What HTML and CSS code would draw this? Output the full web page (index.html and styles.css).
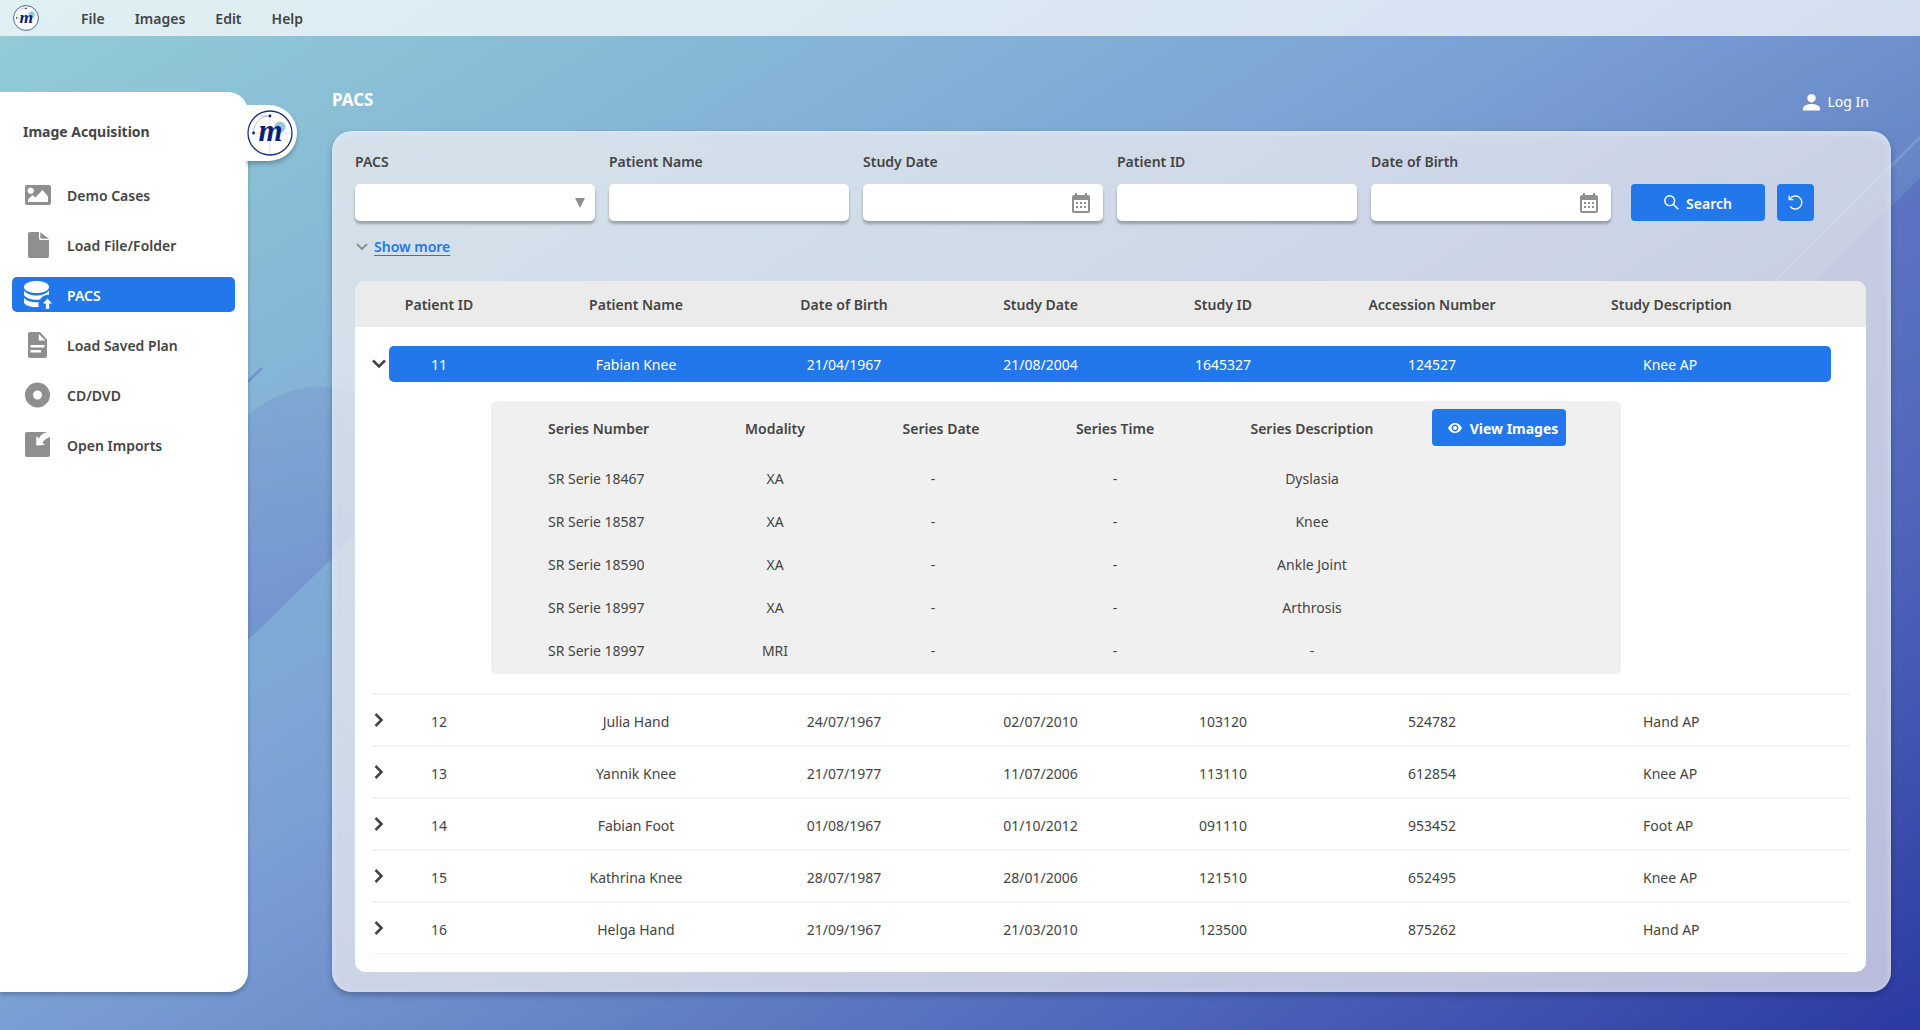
FILE: index.html
```html
<!DOCTYPE html>
<html lang="en">
<head>
<meta charset="utf-8">
<meta name="viewport" content="width=device-width, initial-scale=1.0">
  <title>PACS - Image Acquisition</title>
<link rel="stylesheet" href="styles.css">
</head>
<body>

<!-- shared symbols -->
<svg class="symbols" aria-hidden="true">
  <symbol id="logo" viewBox="0 0 46 46" overflow="visible">
    <circle cx="23" cy="23" r="22" fill="#fff" stroke="#1b2f7c" stroke-width="1.3"/>
    <circle cx="33" cy="17" r="5.6" fill="#93cbdc"/>
    <path d="M23 6v38M5 23h39" stroke="#a9b4d3" stroke-width=".5"/>
    <path d="M6.5 22C7 13 14 6.500 22 6M13 6h10" fill="none" stroke="#8d9bc4" stroke-width=".6"/>
    <circle cx="23" cy="6" r="1.4" fill="#0c1f70"/>
    <circle cx="6.500" cy="23" r="1.4" fill="#0c1f70"/>
    <text x="23.500" y="31" text-anchor="middle" class="logo-letter">m</text>
  </symbol>
  <symbol id="calendar" viewBox="0 0 18 20">
    <path fill="#8f8f8f" fill-rule="evenodd" d="M3 0h2v2h8V0h2v2h1a2 2 0 0 1 2 2v14a2 2 0 0 1-2 2H2a2 2 0 0 1-2-2V4a2 2 0 0 1 2-2h1zM2 7v11h14V7zM4 9h2v2H4zM8 9h2v2H8zM12 9h2v2h-2zM4 13h2v2H4zM8 13h2v2H8zM12 13h2v2h-2z"/>
  </symbol>
  <symbol id="chevron" viewBox="0 0 10 14">
    <path d="M1.500 1L7.500 7L1.500 13" fill="none" stroke="#444" stroke-width="2.600"/>
  </symbol>
</svg>

<!-- page backdrop -->
<svg class="backdrop" viewBox="0 0 1920 1030" preserveAspectRatio="none" aria-hidden="true">
  <defs>
    <linearGradient id="drop" x1="0" y1="0" x2="0" y2="1">
      <stop offset="0" stop-color="#6a82c8" stop-opacity=".25"/>
      <stop offset="1" stop-color="#5a74c4" stop-opacity=".5"/>
    </linearGradient>
    <linearGradient id="wedge" x1="0" y1="0" x2="0" y2="1">
      <stop offset="0" stop-color="#4a55b8" stop-opacity=".35"/>
      <stop offset="1" stop-color="#4a55b8" stop-opacity="0"/>
    </linearGradient>
  </defs>
  <path fill="url(#drop)" d="M150 735V510C190 460 220 435 248 415C290 380 335 380 365 400C410 430 410 480 382 510L248 640Z"/>
  <path d="M230 398L261 369" stroke="#6f94cf" stroke-width="3" stroke-linecap="round"/>
  <path d="M1720 336L1920 137" stroke="#7fb0d8" stroke-opacity=".5" stroke-width="3"/>
  <path fill="url(#wedge)" d="M1920 178L1720 378V800H1920Z"/>
</svg>

<header class="menubar">
  <svg class="menubar-logo" role="img" aria-label="Home"><use href="#logo"/></svg>
  <nav class="menu">
    <a href="#">File</a>
    <a href="#">Images</a>
    <a href="#">Edit</a>
    <a href="#">Help</a>
  </nav>
</header>

<div class="app">

  <aside class="sidebar">
    <button class="sidebar-tab" type="button" aria-label="Toggle sidebar"><svg><use href="#logo"/></svg></button>
    <div class="sidebar-body">
      <h2 class="sidebar-title">Image Acquisition</h2>
      <nav class="sources">
        <a class="source" href="#">
          <svg viewBox="0 0 28 30"><path fill="#8f8f8f" fill-rule="evenodd" d="M3 5h22a2 2 0 0 1 2 2v16a2 2 0 0 1-2 2H3a2 2 0 0 1-2-2V7a2 2 0 0 1 2-2zM6.700 7.500a3.200 3.200 0 1 0 .01 0zM4 22h20v-5.500L18.500 10L11.500 17.500L8.500 15L4 19.500z"/></svg>
          <span>Demo Cases</span>
        </a>
        <a class="source" href="#">
          <svg viewBox="0 0 28 30"><path fill="#8f8f8f" d="M6 2h9v6.500a1.500 1.500 0 0 0 1.500 1.500H25v16a2 2 0 0 1-2 2H6a2 2 0 0 1-2-2V4a2 2 0 0 1 2-2zM16.300 2.200L25 8.700H17.500a1.200 1.200 0 0 1-1.200-1.200z"/></svg>
          <span>Load File/Folder</span>
        </a>
        <a class="source active" href="#">
          <svg viewBox="0 0 28 30"><path fill="#fff" d="M12.500 1C19.500 1 25 3.500 25 7S19.500 13 12.500 13S0 10.500 0 7S5.500 1 12.500 1zM0 10.500C2.500 14 7 15.500 12.500 15.500S22.500 14 25 10.500V14.800C21 14.800 17.500 16.500 16 19.600C9 20.500 2 18.500 0 15zM0 18C3 21.500 9 22.800 14.800 22.200C14.300 24 14.300 25.500 14.800 27C7 27.800 1 25.500 0 22.500zM23.500 18.500L28 23.500H25.200V29H21.800V23.500H19z"/></svg>
          <span>PACS</span>
        </a>
        <a class="source" href="#">
          <svg viewBox="0 0 28 30"><path fill="#8f8f8f" fill-rule="evenodd" d="M6 2h10l7 7.500V26a2 2 0 0 1-2 2H6a2 2 0 0 1-2-2V4a2 2 0 0 1 2-2zM14.800 4v6.500H21.500zM6.500 15v2.400h14V15zM6.500 20v2.400h10.500V20z"/></svg>
          <span>Load Saved Plan</span>
        </a>
        <a class="source" href="#">
          <svg viewBox="0 0 28 30"><circle cx="13.500" cy="15" r="8.500" fill="none" stroke="#8f8f8f" stroke-width="8"/></svg>
          <span>CD/DVD</span>
        </a>
        <a class="source" href="#">
          <svg viewBox="0 0 28 30"><path fill="#8f8f8f" d="M3 2H25A12 12 0 0 0 14.800 8.500L12.300 6V15.500L21 15L18.500 12.500Q21 8.500 26 7V25a2 2 0 0 1-2 2H3a2 2 0 0 1-2-2V4a2 2 0 0 1 2-2z"/></svg>
          <span>Open Imports</span>
        </a>
      </nav>
    </div>
  </aside>

  <main class="content">
    <div class="title-row">
      <h1>PACS</h1>
      <a class="login" href="#">
        <svg viewBox="0 0 17 17"><path fill="#fff" d="M8.500 0a4.200 4.200 0 1 1-.01 0zM0 16.500V14.500C0 11.500 4.500 10 8.500 10S17 11.500 17 14.500V16.500z"/></svg>
        Log In
      </a>
    </div>

    <section class="panel">
      <form class="filters">
        <div class="field">
          <label for="pacs">PACS</label>
          <div class="control">
            <select id="pacs"><option></option></select>
            <svg class="arrow" viewBox="0 0 10 10"><path fill="#8f8f8f" d="M0 0h10L5 10z"/></svg>
          </div>
        </div>
        <div class="field">
          <label for="name">Patient Name</label>
          <div class="control"><input id="name" type="text"></div>
        </div>
        <div class="field">
          <label for="study-date">Study Date</label>
          <div class="control">
            <input id="study-date" type="text">
            <svg class="calendar"><use href="#calendar"/></svg>
          </div>
        </div>
        <div class="field">
          <label for="patient-id">Patient ID</label>
          <div class="control"><input id="patient-id" type="text"></div>
        </div>
        <div class="field">
          <label for="birth">Date of Birth</label>
          <div class="control">
            <input id="birth" type="text">
            <svg class="calendar"><use href="#calendar"/></svg>
          </div>
        </div>
        <div class="actions">
          <button class="btn" type="button">
            <svg class="icon-search" viewBox="0 0 15 15"><g fill="none" stroke="#fff" stroke-width="1.400"><circle cx="5.700" cy="5.700" r="4.900"/><path d="M9.200 9.200L14.300 14.300"/></g></svg>
            <span>Search</span>
          </button>
          <button class="btn reset" type="button" aria-label="Reset">
            <svg class="icon-search" viewBox="0 0 15 15"><g fill="none" stroke="#fff" stroke-width="1.300"><path d="M1.600 4.500A6.500 6.500 0 1 1 2.200 11.500"/><path d="M1.200 .5V4.700H5.500"/></g></svg>
          </button>
        </div>
      </form>

      <div class="more">
        <svg viewBox="0 0 12 8"><path d="M1 1l5 5l5-5" fill="none" stroke="#8f8f8f" stroke-width="2"/></svg>
        <a href="#">Show more</a>
      </div>

      <div class="results">
        <table class="studies">
          <colgroup>
            <col class="c-toggle"><col class="c-id"><col class="c-name"><col class="c-birth"><col class="c-date"><col class="c-study"><col class="c-accession"><col class="c-desc"><col class="c-end">
          </colgroup>
          <thead>
            <tr>
              <th></th><th>Patient ID</th><th>Patient Name</th><th>Date of Birth</th><th>Study Date</th><th>Study ID</th><th>Accession Number</th><th class="desc">Study Description</th><th></th>
            </tr>
          </thead>
          <tbody>
            <tr class="selected">
              <td><button class="toggle open" type="button" aria-label="Collapse 11"><svg><use href="#chevron"/></svg></button></td>
              <td>11</td><td>Fabian Knee</td><td>21/04/1967</td><td>21/08/2004</td><td>1645327</td><td>124527</td><td class="desc">Knee AP</td><td></td>
            </tr>
            <tr class="detail">
              <td colspan="9">
                <div class="series-box">
                  <table class="series">
                    <colgroup>
                      <col class="s-number"><col class="s-modality"><col class="s-date"><col class="s-time"><col class="s-desc"><col class="s-view">
                    </colgroup>
                    <thead>
                      <tr>
                        <th>Series Number</th><th>Modality</th><th>Series Date</th><th>Series Time</th><th>Series Description</th>
                        <th>
                          <button class="btn view" type="button">
                            <svg viewBox="0 0 14 10"><path fill="#fff" fill-rule="evenodd" d="M7 0C10 0 12.700 2 14 5C12.700 8 10 10 7 10S1.300 8 0 5C1.300 2 4 0 7 0zM7 1.600a3.400 3.400 0 1 0 .01 0z"/><circle cx="7" cy="5" r="2" fill="#fff"/></svg>
                            <span>View Images</span>
                          </button>
                        </th>
                      </tr>
                    </thead>
                    <tbody>
                      <tr><td>SR Serie 18467</td><td>XA</td><td>-</td><td>-</td><td>Dyslasia</td><td></td></tr>
                      <tr><td>SR Serie 18587</td><td>XA</td><td>-</td><td>-</td><td>Knee</td><td></td></tr>
                      <tr><td>SR Serie 18590</td><td>XA</td><td>-</td><td>-</td><td>Ankle Joint</td><td></td></tr>
                      <tr><td>SR Serie 18997</td><td>XA</td><td>-</td><td>-</td><td>Arthrosis</td><td></td></tr>
                      <tr><td>SR Serie 18997</td><td>MRI</td><td>-</td><td>-</td><td>-</td><td></td></tr>
                    </tbody>
                  </table>
                </div>
              </td>
            </tr>
            <tr class="study">
              <td><button class="toggle" type="button" aria-label="Expand 12"><svg><use href="#chevron"/></svg></button></td>
              <td>12</td><td>Julia Hand</td><td>24/07/1967</td><td>02/07/2010</td><td>103120</td><td>524782</td><td class="desc">Hand AP</td><td></td>
            </tr>
            <tr class="study">
              <td><button class="toggle" type="button" aria-label="Expand 13"><svg><use href="#chevron"/></svg></button></td>
              <td>13</td><td>Yannik Knee</td><td>21/07/1977</td><td>11/07/2006</td><td>113110</td><td>612854</td><td class="desc">Knee AP</td><td></td>
            </tr>
            <tr class="study">
              <td><button class="toggle" type="button" aria-label="Expand 14"><svg><use href="#chevron"/></svg></button></td>
              <td>14</td><td>Fabian Foot</td><td>01/08/1967</td><td>01/10/2012</td><td>091110</td><td>953452</td><td class="desc">Foot AP</td><td></td>
            </tr>
            <tr class="study">
              <td><button class="toggle" type="button" aria-label="Expand 15"><svg><use href="#chevron"/></svg></button></td>
              <td>15</td><td>Kathrina Knee</td><td>28/07/1987</td><td>28/01/2006</td><td>121510</td><td>652495</td><td class="desc">Knee AP</td><td></td>
            </tr>
            <tr class="study">
              <td><button class="toggle" type="button" aria-label="Expand 16"><svg><use href="#chevron"/></svg></button></td>
              <td>16</td><td>Helga Hand</td><td>21/09/1967</td><td>21/03/2010</td><td>123500</td><td>875262</td><td class="desc">Hand AP</td><td></td>
            </tr>
          </tbody>
        </table>
        <div class="table-end"></div>
      </div>
    </section>
  </main>
</div>

</body>
</html>
```
FILE: styles.css
```css
* {box-sizing: border-box;}

body {
  margin: 0;
  min-height: 100vh;
  display: flex;
  flex-direction: column;
  font-family: "Noto Sans", sans-serif;
  font-size: 14px;
  line-height: 20px;
  color: #444;
  background: linear-gradient(148deg, #93cdd6 0%, #8bc0d6 13%, #82afd6 31%, #7aa0d4 45%, #6e90cc 55%, #6280c5 64%, #4e66ba 78%, #2c39a3 100%);
}

a {
  color: inherit;
  text-decoration: none;
}

button {
  font: inherit;
  cursor: pointer;
}

.symbols {
  display: none;
}

.logo-letter {
  font-family: "Liberation Serif", serif;
  font-size: 31px;
  font-weight: bold;
  font-style: italic;
  fill: #0c1f70;
}

.backdrop {
  position: absolute;
  top: 0;
  left: 0;
  width: 100%;
  height: 100%;
  z-index: -1;
}

/* top menu */
.menubar {
  height: 36px;
  padding-left: 13px;
  display: flex;
  align-items: center;
  gap: 42px;
  background: rgba(255, 255, 255, .7);
}

.menubar-logo {
  width: 26px;
  height: 26px;
}

.menu {
  padding-top: 2px;
  display: flex;
  gap: 30px;
  font-weight: 600;
}

.app {
  flex: 1;
  display: flex;
}

/* sidebar */
.sidebar {
  position: relative;
  width: 248px;
  flex-shrink: 0;
  padding: 56px 0 38px;
  display: flex;
}

.sidebar-body {
  flex: 1;
  position: relative;
  padding: 30px 13px 0 12px;
  background: #fff;
  border-radius: 0 20px 20px 0;
  box-shadow: 0 3px 4px rgba(0, 0, 0, .2);
}

.sidebar-tab {
  position: absolute;
  top: 69px;
  left: 220px;
  width: 77px;
  height: 56px;
  padding: 0 4px 0 0;
  display: flex;
  align-items: center;
  justify-content: flex-end;
  background: #fff;
  border: 0;
  border-radius: 0 28px 28px 0;
  box-shadow: 0 3px 4px rgba(0, 0, 0, .25);
  z-index: 1;
  clip-path: inset(0 -8px -8px 26px);
}

.sidebar-tab svg {
  width: 46px;
  height: 46px;
}

.sidebar-title {
  margin: 0 0 35px 11px;
  font-size: 14px;
  font-weight: bold;
}

.sources {
  display: flex;
  flex-direction: column;
  gap: 15px;
}

.source {
  height: 35px;
  padding-left: 12px;
  display: flex;
  align-items: center;
  gap: 15px;
  border-radius: 5px;
  font-weight: 600;
}

.source svg {
  width: 28px;
  height: 30px;
}

.source span,
.btn span {
  padding-top: 2px;
}

.source.active {
  background: #2277ea;
  color: #fff;
}

/* main */
.content {
  flex: 1;
  min-width: 0;
  padding: 52px 29px 38px 84px;
  display: flex;
  flex-direction: column;
}

.title-row {
  height: 43px;
  padding-right: 22px;
  display: flex;
  align-items: flex-start;
  justify-content: space-between;
}

.title-row h1 {
  margin: 0;
  font-size: 17px;
  line-height: 24px;
  font-weight: bold;
  color: #fff;
}

.login {
  display: flex;
  align-items: center;
  gap: 8px;
  line-height: 28px;
  color: #fff;
}

.login svg {
  width: 17px;
  height: 17px;
}

.panel {
  flex: 1;
  padding: 21px 25px 20px 23px;
  display: flex;
  flex-direction: column;
  background: rgba(244, 241, 241, .7);
  border-radius: 20px;
  box-shadow: 0 3px 6px rgba(0, 0, 0, .25), inset 0 2px 8px rgba(225, 235, 255, .6);
}

.filters {
  display: flex;
  align-items: flex-end;
  gap: 14px;
}

.field {
  flex: 0 1 240px;
  display: flex;
  flex-direction: column;
  gap: 12px;
  font-weight: 600;
}

.control {
  position: relative;
}

.control input,
.control select {
  display: block;
  width: 100%;
  height: 37px;
  padding: 0 12px;
  font: inherit;
  background: #fff;
  border: 0;
  border-radius: 5px;
  box-shadow: 0 3px 3px rgba(0, 0, 0, .28);
  appearance: none;
}

.arrow {
  position: absolute;
  top: 14px;
  right: 10px;
  width: 10px;
  height: 10px;
  pointer-events: none;
}

.control .calendar {
  position: absolute;
  top: 9px;
  right: 13px;
  width: 18px;
  height: 20px;
}

.actions {
  margin-left: 6px;
  display: flex;
  gap: 12px;
}

.btn {
  width: 134px;
  height: 37px;
  padding: 0;
  display: flex;
  align-items: center;
  justify-content: center;
  gap: 7px;
  background: #2277ea;
  color: #fff;
  border: 0;
  border-radius: 4px;
  font-weight: 600;
}

.btn.reset {
  width: 37px;
}

.icon-search {
  width: 15px;
  height: 15px;
}

.more {
  margin: 16px 0 24px;
  padding-left: 1px;
  display: flex;
  align-items: center;
  gap: 6px;
}

.more svg {
  width: 12px;
  height: 8px;
}

.more a {
  color: #2277ea;
  font-weight: 600;
  text-decoration: underline;
  text-decoration-thickness: 1px;
  text-underline-offset: 3px;
}

/* results */
.results {
  flex: 1;
  background: #fff;
  border-radius: 10px;
  overflow: hidden;
}

table {
  width: 100%;
  table-layout: fixed;
  border-collapse: separate;
  border-spacing: 0;
}

th,
td {
  padding: 0;
  text-align: center;
}

th {
  font-weight: 600;
}

.c-toggle {width: 34px;}
.c-id {width: 100px;}
.c-name {width: 294px;}
.c-birth {width: 122px;}
.c-date {width: 271px;}
.c-study {width: 94px;}
.c-accession {width: 324px;}
.c-desc {width: 237px;}
.c-end {width: 35px;}

.studies > thead th {
  height: 65px;
  padding-top: 2px;
  background: #ebebeb;
  border-bottom: 19px solid #fff;
}

.studies th.desc {
  padding-left: 17px;
  text-align: left;
}

.studies td.desc {
  padding-left: 49px;
  text-align: left;
}

.selected td {
  height: 36px;
}

.selected td:not(:first-child):not(:last-child) {
  padding-top: 2px;
  background: #2277ea;
  color: #fff;
}

.selected td:nth-child(2) {border-radius: 5px 0 0 5px;}
.selected td:nth-child(8) {border-radius: 0 5px 5px 0;}

.study {
  background: linear-gradient(#f2f2f2, #f2f2f2) 16px 0 / calc(100% - 32px) 2px no-repeat;
}

.study td {
  height: 52px;
  padding-top: 6px;
}

.study td:first-child {
  padding-top: 2px;
}

.table-end {
  height: 1px;
  margin: 0 16px;
  background: #f2f2f2;
}

.toggle {
  width: 14px;
  height: 14px;
  margin-left: 17px;
  padding: 0;
  display: flex;
  align-items: center;
  justify-content: center;
  background: none;
  border: 0;
}

.toggle svg {
  width: 10px;
  height: 14px;
}

.toggle.open svg {
  transform: rotate(90deg);
}

.detail > td {
  padding: 19px 245px 19px 136px;
}

.series-box {
  height: 273px;
  background: #f0f0f0;
  border-radius: 6px;
}

.s-number {width: 214px;}
.s-modality {width: 140px;}
.s-date {width: 192px;}
.s-time {width: 156px;}
.s-desc {width: 238px;}
.s-view {width: 190px;}

.series th {
  height: 56px;
}

.series td {
  height: 43px;
}

.series th:first-child,
.series td:first-child {
  padding-left: 57px;
  text-align: left;
}

.series th:last-child {
  padding: 8px 0 0 1px;
  vertical-align: top;
}

.series td:nth-child(3) {
  padding-right: 16px;
}

.btn.view {
  padding-left: 8px;
  gap: 8px;
  font-weight: bold;
}

.btn.view svg {
  width: 14px;
  height: 10px;
}
```
